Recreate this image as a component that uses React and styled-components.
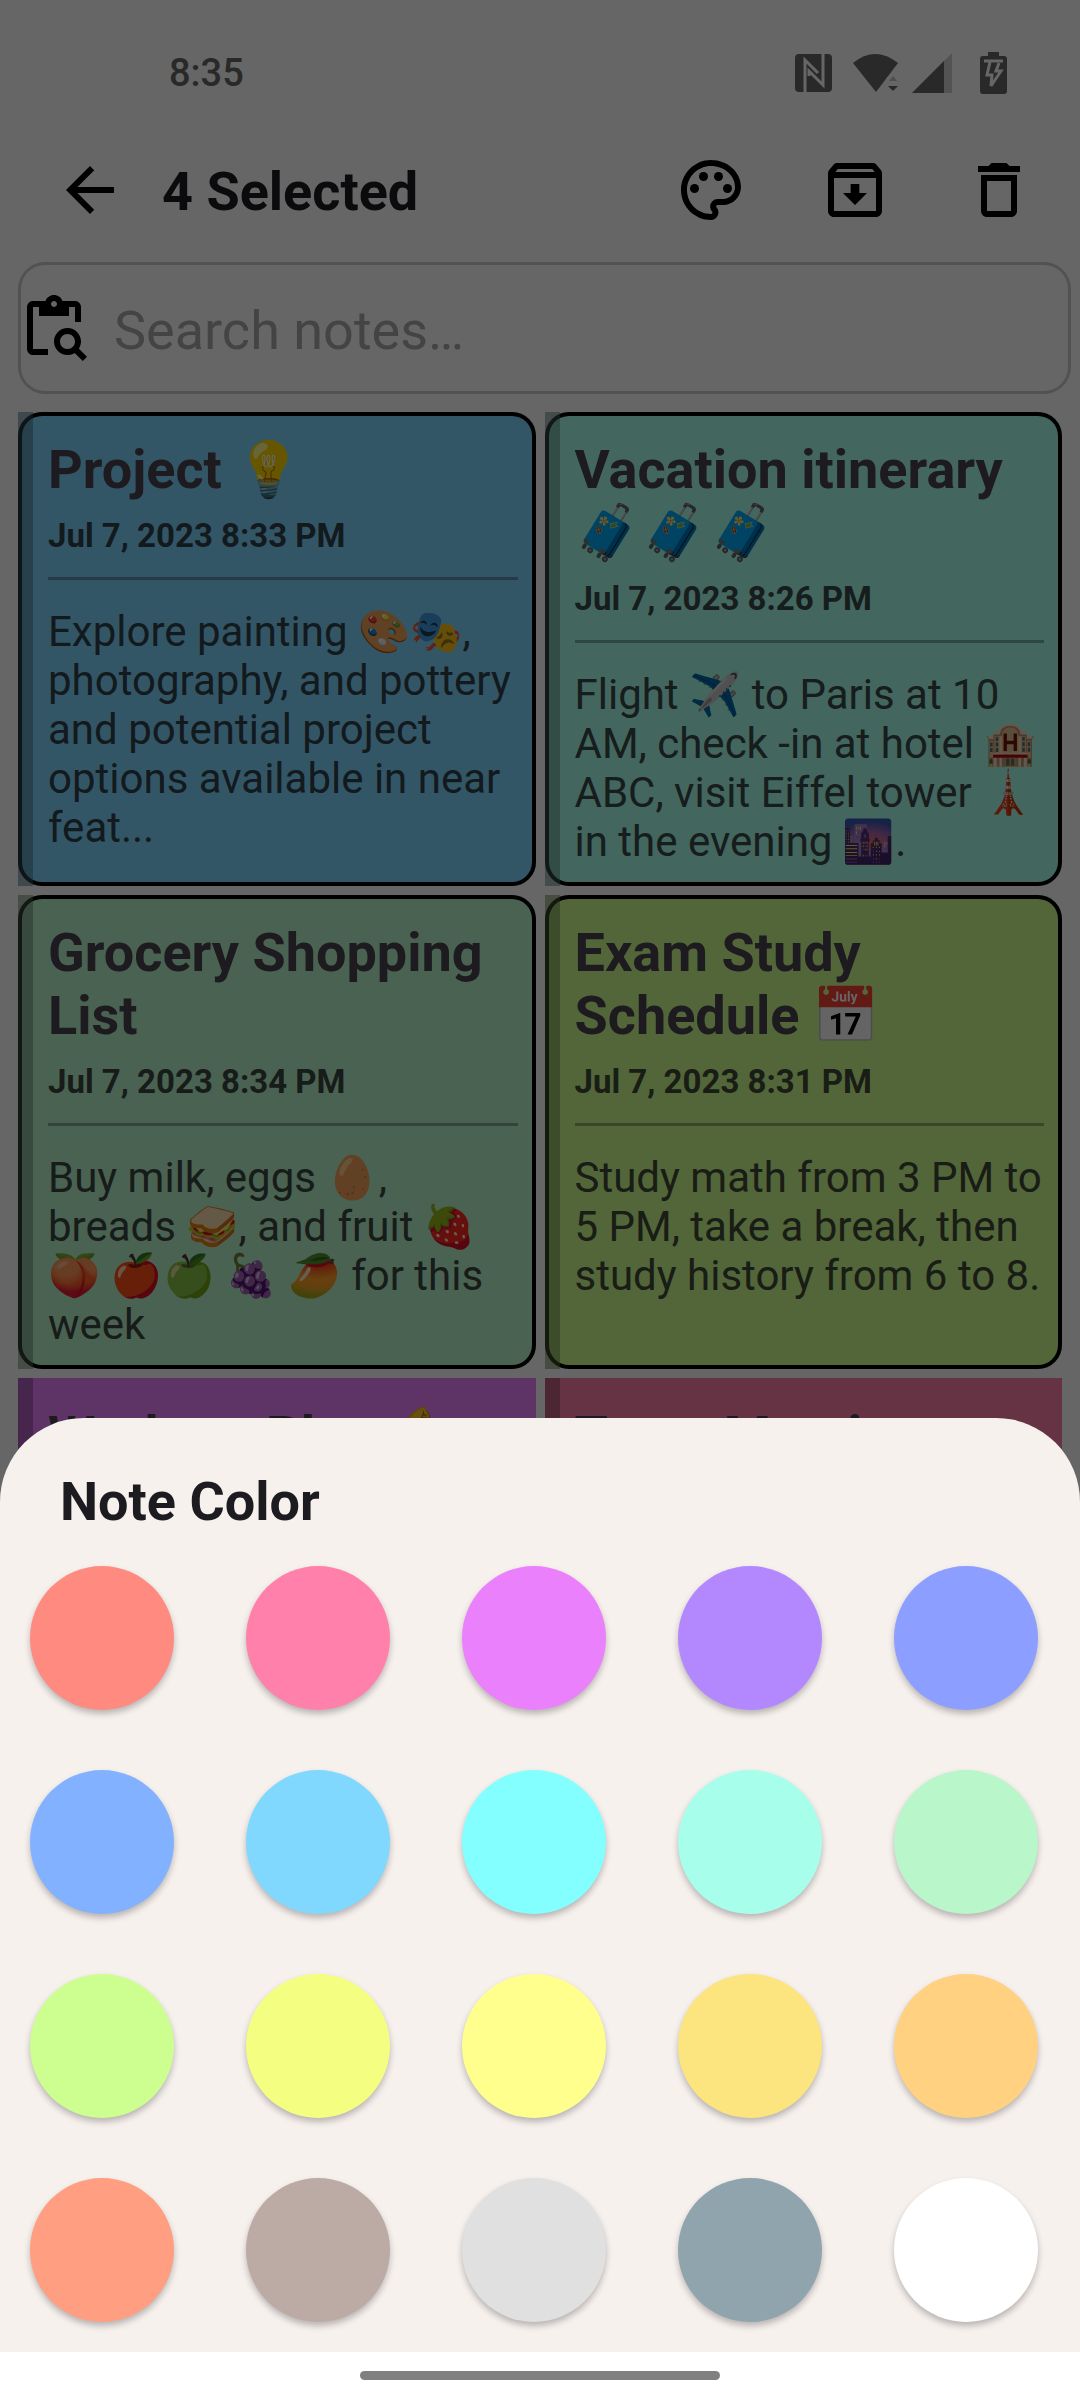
import React from 'react'
import styled, { createGlobalStyle } from 'styled-components';
import { MdArrowBack, MdOutlinePalette, MdOutlineArchive, MdDeleteOutline } from 'react-icons/md'

const notes = [
  {
    title: 'Project 💡',
    date: 'Jul 7, 2023 8:33 PM',
    text: 'Explore painting 🎨🎭, photography, and pottery and potential project options available in near feat...',
    color: '#80d8ff',
    selected: true,
  },
  {
    title: 'Vacation itinerary 🧳🧳🧳',
    date: 'Jul 7, 2023 8:26 PM',
    text: 'Flight ✈️ to Paris at 10 AM, check -in at hotel 🏨 ABC, visit Eiffel tower 🗼 in the evening 🌆.',
    color: '#a7ffeb',
    selected: true,
  },
  {
    title: 'Grocery Shopping List',
    date: 'Jul 7, 2023 8:34 PM',
    text: 'Buy milk, eggs 🥚, breads 🥪, and fruit 🍓 🍑 🍎🍏 🍇 🥭 for this week',
    color: '#b9f6ca',
    selected: true,
  },
  {
    title: 'Exam Study Schedule 📅',
    date: 'Jul 7, 2023 8:31 PM',
    text: 'Study math from 3 PM to 5 PM, take a break, then study history from 6 to 8.',
    color: '#ccff90',
    selected: true,
  },
  { title: 'Workout Plan 💪', color: '#ea80fc' },
  { title: 'Team Meeting', color: '#ff80ab' },
];

const swatches = [
  { name: 'Red', value: '#ff8a80' },
  { name: 'Pink', value: '#ff80ab' },
  { name: 'Purple', value: '#ea80fc' },
  { name: 'Deep purple', value: '#b388ff' },
  { name: 'Indigo', value: '#8c9eff' },
  { name: 'Blue', value: '#82b1ff' },
  { name: 'Light blue', value: '#80d8ff' },
  { name: 'Cyan', value: '#84ffff' },
  { name: 'Teal', value: '#a7ffeb' },
  { name: 'Green', value: '#b9f6ca' },
  { name: 'Light green', value: '#ccff90' },
  { name: 'Lime', value: '#f4ff81' },
  { name: 'Yellow', value: '#ffff8d' },
  { name: 'Amber', value: '#fce47e' },
  { name: 'Orange', value: '#ffd180' },
  { name: 'Deep orange', value: '#ff9e80' },
  { name: 'Brown', value: '#bcaaa4' },
  { name: 'Grey', value: '#e0e0e0' },
  { name: 'Blue grey', value: '#90a4ae' },
  { name: 'White', value: '#ffffff' },
];

function NfcIcon() {
  return (
    <svg width="45" height="38" viewBox="0 0 45 38">
      <rect width="37" height="38" rx="4" fill="currentColor" />
      <path d="M10 38V6L23 19M28 0V31L14 17V22" fill="none" stroke="#fff" strokeWidth="3" />
    </svg>
  );
}

function WifiIcon() {
  return (
    <svg width="46" height="38" viewBox="0 0 46 38">
      <path d="M0 9Q22 -9 45 9L23 38Z" fill="currentColor" />
      <path d="M34 23H46V38H31Z" fill="#fff" />
      <path d="M36 27L40 22L44 27Z" fill="#c4c4c4" />
      <path d="M35 32H45L40 37Z" fill="currentColor" />
    </svg>
  );
}

function SignalIcon() {
  return (
    <svg width="40" height="40" viewBox="0 0 40 40">
      <path d="M0 40L40 0V40Z" fill="#cfcfcf" />
      <path d="M0 40L32 8V40Z" fill="currentColor" />
    </svg>
  );
}

function BatteryIcon() {
  return (
    <svg width="42" height="42" viewBox="-15 0 42 42">
      <path d="M8 0H19V4H24Q27 4 27 7V39Q27 42 24 42H3Q0 42 0 39V7Q0 4 3 4H8Z" fill="currentColor" />
      <path d="M4 9H23" stroke="#fff" strokeWidth="3" />
      <path d="M10 10L7 23H12L11 34L21 19H16L19 11" fill="none" stroke="#fff" strokeWidth="3" />
    </svg>
  );
}

function ClipboardSearchIcon() {
  return (
    <svg width="72" height="72" viewBox="0 0 24 24" fill="currentColor">
      <path d="M19 3H14.82C14.4 1.84 13.3 1 12 1S9.6 1.84 9.18 3H5C3.9 3 3 3.9 3 5V19C3 20.1 3.9 21 5 21H10V19H5V5H7V8H17V5H19V10H21V5C21 3.9 20.1 3 19 3M12 5C11.45 5 11 4.55 11 4S11.45 3 12 3 13 3.45 13 4 12.55 5 12 5" />
      <path d="M20.3 18.9C20.7 18.2 21 17.4 21 16.5C21 14 19 12 16.5 12S12 14 12 16.5 14 21 16.5 21C17.4 21 18.2 20.8 18.9 20.3L21.6 23L23 21.6L20.3 18.9M16.5 19C15.1 19 14 17.9 14 16.5S15.1 14 16.5 14 19 15.1 19 16.5 17.9 19 16.5 19" />
    </svg>
  );
}

function App() {
  return (
    <Screen>
      <GlobalStyle />
      <StatusBar>
        <time>8:35</time>
        <StatusIcons>
          <NfcIcon />
          <WifiIcon />
          <SignalIcon />
          <BatteryIcon />
        </StatusIcons>
      </StatusBar>
      <Toolbar>
        <IconButton aria-label="Back"><MdArrowBack /></IconButton>
        <h1>4 Selected</h1>
        <Actions>
          <IconButton aria-label="Note color"><MdOutlinePalette /></IconButton>
          <IconButton aria-label="Archive"><MdOutlineArchive /></IconButton>
          <IconButton aria-label="Delete"><MdDeleteOutline /></IconButton>
        </Actions>
      </Toolbar>
      <SearchBox>
        <ClipboardSearchIcon />
        <input type="text" aria-label="Search notes" placeholder="Search notes…" />
      </SearchBox>
      <NoteGrid>
        {notes.map((note) => (
          <NoteCard key={note.title} $color={note.color} $selected={note.selected}>
            <h2>{note.title}</h2>
            {note.date && <time>{note.date}</time>}
            {note.text && <hr />}
            {note.text && <p>{note.text}</p>}
          </NoteCard>
        ))}
      </NoteGrid>
      <Scrim />
      <BottomArea>
        <Sheet>
          <h2>Note Color</h2>
          <SwatchGrid>
            {swatches.map((swatch) => (
              <Swatch key={swatch.name} aria-label={swatch.name} $color={swatch.value} />
            ))}
          </SwatchGrid>
        </Sheet>
        <NavBar>
          <span />
        </NavBar>
      </BottomArea>
    </Screen>
  );
}

const GlobalStyle = createGlobalStyle`
  * {
    box-sizing: border-box;
  }

  body {
    margin: 0;
    background: #fff;
    font-family: Roboto, "Noto Color Emoji", sans-serif;
  }

  h1, h2, p {
    margin: 0;
  }

  button {
    border: none;
    padding: 0;
    cursor: pointer;
  }
`;

const Screen = styled.div`
  position: relative;
  height: 100vh;
  overflow: hidden;
`;

const StatusBar = styled.header`
  display: flex;
  align-items: center;
  justify-content: space-between;
  height: 142px;
  padding: 4px 73px 0 169px;
  color: #666;
  font-size: 38px;
  font-weight: 500;
`;

const StatusIcons = styled.div`
  display: flex;
  align-items: center;
  gap: 13px;

  svg {
    display: block;
  }
`;

const Toolbar = styled.div`
  display: flex;
  align-items: center;
  height: 96px;
  padding: 0 45px 0 54px;

  h1 {
    margin: 4px 0 0 36px;
    color: #1c1b1f;
    font-size: 54px;
    font-weight: 700;
    line-height: 64px;
  }
`;

const Actions = styled.div`
  display: flex;
  gap: 72px;
  margin-left: auto;
`;

const IconButton = styled.button`
  display: flex;
  background: none;
  color: #000;
  font-size: 72px;
`;

const SearchBox = styled.label`
  display: flex;
  align-items: center;
  gap: 24px;
  height: 132px;
  margin: 24px 9px 18px 18px;
  border-radius: 27px;
  box-shadow: inset 0 0 0 3px #ccc;

  input {
    flex: 1;
    min-width: 0;
    padding: 4px 0 0;
    border: none;
    outline: none;
    background: none;
    font-family: inherit;
    font-size: 54px;
  }

  input::placeholder {
    color: #aaa;
    opacity: 1;
  }
`;

const NoteGrid = styled.main`
  display: grid;
  grid-template-columns: 1fr 1fr;
  grid-auto-rows: 474px;
  gap: 9px;
  padding: 0 18px;
`;

const NoteCard = styled.article`
  position: relative;
  padding: 26px 18px 0 30px;
  background: ${({ $color }) => $color};
  border-radius: ${({ $selected }) => ($selected ? '24px' : '0')};
  box-shadow: ${({ $selected }) => ($selected ? 'inset 0 0 0 4px #000' : 'none')};
  color: color-mix(in srgb, ${({ $color }) => $color} 20%, #1c1b1f);

  /* the folded edge keeps square corners even on a rounded card */
  &::before {
    content: '';
    position: absolute;
    top: 0;
    bottom: 0;
    left: 0;
    width: 15px;
    background: color-mix(in srgb, ${({ $color }) => $color} 50%, #000);
    opacity: 0.5;
  }

  h2 {
    color: #49454f;
    font-size: 54px;
    font-weight: 700;
    line-height: 63px;
  }

  time {
    display: block;
    margin-top: 15px;
    font-size: 33px;
    font-weight: 700;
    line-height: 40px;
  }

  hr {
    height: 3px;
    margin: 21px 0 27px;
    border: none;
    background: rgba(0, 0, 0, 0.3);
  }

  p {
    font-size: 42px;
    line-height: 49px;
  }
`;

const Scrim = styled.div`
  position: absolute;
  inset: 0;
  background: rgba(0, 0, 0, 0.6);
`;

const BottomArea = styled.div`
  position: absolute;
  right: 0;
  bottom: 0;
  left: 0;
`;

const Sheet = styled.section`
  padding: 54px 30px 30px;
  background: #f7f1ee;
  border-radius: 84px 84px 0 0;

  h2 {
    padding-left: 30px;
    color: #1c1b1f;
    font-size: 54px;
    font-weight: 700;
    line-height: 60px;
  }
`;

const SwatchGrid = styled.div`
  display: grid;
  grid-template-columns: repeat(5, auto);
  justify-content: space-between;
  gap: 60px 0;
  margin: 34px 12px 0 0;
`;

const Swatch = styled.button`
  width: 144px;
  height: 144px;
  border-radius: 50%;
  background: ${({ $color }) => $color};
  box-shadow: 0 4px 6px rgba(0, 0, 0, 0.25);
`;

const NavBar = styled.nav`
  display: flex;
  align-items: center;
  justify-content: center;
  height: 48px;
  padding-bottom: 2px;
  background: #fff;

  span {
    width: 360px;
    height: 9px;
    border-radius: 5px;
    background: #808080;
  }
`;

export default App
